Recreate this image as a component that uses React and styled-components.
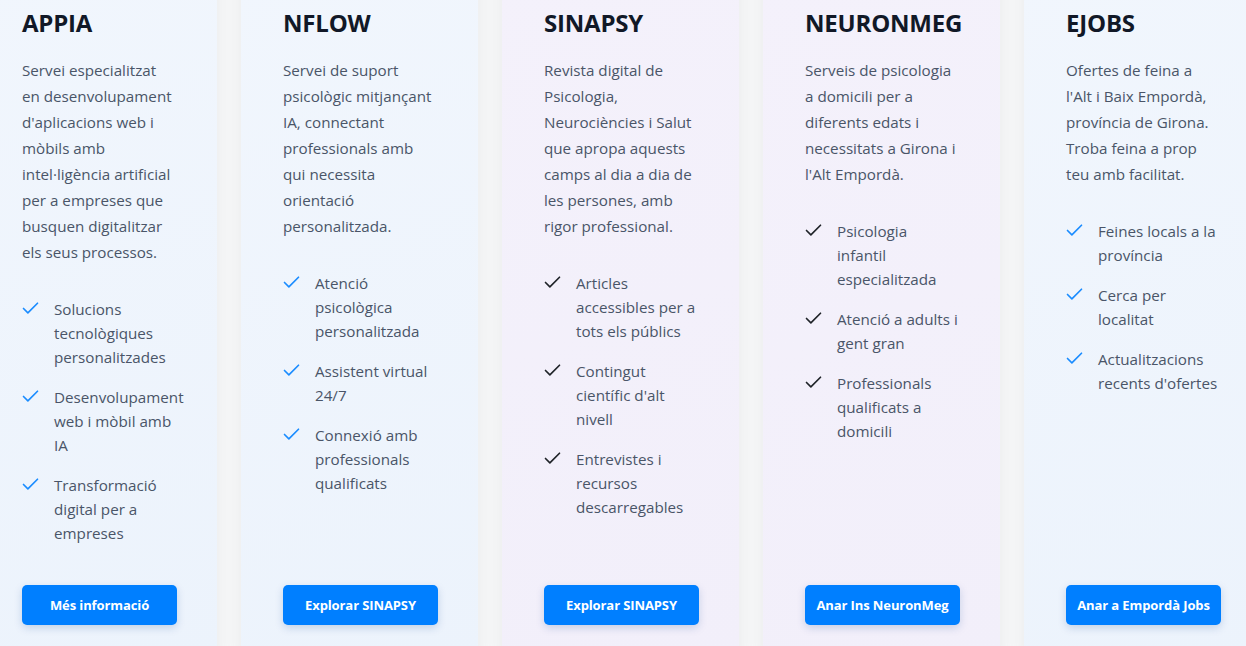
import React from "react";
import styled, { createGlobalStyle } from "styled-components";

const Global = createGlobalStyle`
  html, body { margin: 0; padding: 0; background: #f8f9fa; }
  body { width: 1246px; height: 646px; overflow: hidden; font-family: "Open Sans", "Noto Sans", sans-serif; }
  #root { width: 1246px; height: 646px; overflow: hidden; }
`;

const Row = styled.div`
  display: flex;
  gap: 24px;
  margin-left: -20px;
  margin-top: -32px;
  align-items: stretch;
`;

const Card = styled.div`
  flex: 0 0 237px;
  width: 237px;
  min-width: 0;
  box-sizing: border-box;
  padding: 40px 42px 40px 42px;
  display: flex;
  flex-direction: column;
  border-radius: 8px;
  background: ${(p) =>
    p.$tone === "violet"
      ? "linear-gradient(160deg, #f4f1fb 0%, #f2effa 100%)"
      : "linear-gradient(160deg, #f1f6fd 0%, #ecf3fc 100%)"};
  box-shadow: 0 4px 22px rgba(0, 0, 0, 0.07);
`;

const Title = styled.h3`
  margin: 0;
  font-size: 24px;
  line-height: 29px;
  font-weight: 700;
  color: #111827;
  letter-spacing: -0.2px;
  white-space: nowrap;
`;

const Desc = styled.p`
  margin: 20px 0 0;
  font-size: 15.2px;
  line-height: 26px;
  color: #4a5568;
`;

const List = styled.ul`
  list-style: none;
  margin: 32px 0 0;
  padding: 0;
  display: flex;
  flex-direction: column;
  gap: 16px;
`;

const Item = styled.li`
  display: flex;
  align-items: flex-start;
  gap: 13px;
  font-size: 15.2px;
  line-height: 24px;
  color: #4a5568;
`;

const Check = styled.svg`
  flex: 0 0 21px;
  width: 21px;
  height: 21px;
  margin-top: 1px;
  margin-left: -2px;
  color: ${(p) => (p.$dark ? "#1f2328" : "#1a8cff")};
`;

const Button = styled.button`
  margin-top: auto;
  align-self: flex-start;
  width: 155px;
  height: 40px;
  border: none;
  border-radius: 5px;
  background: #007fff;
  color: #ffffff;
  font-family: "Open Sans", "Noto Sans", sans-serif;
  font-size: 13px;
  font-weight: 700;
  letter-spacing: -0.1px;
  white-space: nowrap;
  box-shadow: 0 3px 8px rgba(0, 60, 140, 0.18);
  cursor: pointer;
`;

const Spacer = styled.div`
  height: 40px;
  flex: 0 0 40px;
`;

const cards = [
  {
    title: "APPIA",
    tone: "blue",
    desc: "Servei especialitzat en desenvolupament d'aplicacions web i mòbils amb intel·ligència artificial per a empreses que busquen digitalitzar els seus processos.",
    items: [
      "Solucions tecnològiques personalitzades",
      "Desenvolupament web i mòbil amb IA",
      "Transformació digital per a empreses",
    ],
    button: "Més informació",
  },
  {
    title: "NFLOW",
    tone: "blue",
    desc: "Servei de suport psicològic mitjançant IA, connectant professionals amb qui necessita orientació personalitzada.",
    items: [
      "Atenció psicològica personalitzada",
      "Assistent virtual 24/7",
      "Connexió amb professionals qualificats",
    ],
    button: "Explorar SINAPSY",
  },
  {
    title: "SINAPSY",
    tone: "violet",
    dark: true,
    desc: "Revista digital de Psicologia, Neurociències i Salut que apropa aquests camps al dia a dia de les persones, amb rigor professional.",
    items: [
      "Articles accessibles per a tots els públics",
      "Contingut científic d'alt nivell",
      "Entrevistes i recursos descarregables",
    ],
    button: "Explorar SINAPSY",
  },
  {
    title: "NEURONMEG",
    tone: "violet",
    dark: true,
    desc: "Serveis de psicologia a domicili per a diferents edats i necessitats a Girona i l'Alt Empordà.",
    items: [
      "Psicologia infantil especialitzada",
      "Atenció a adults i gent gran",
      "Professionals qualificats a domicili",
    ],
    button: "Anar Ins NeuronMeg",
  },
  {
    title: "EJOBS",
    tone: "blue",
    desc: "Ofertes de feina a l'Alt i Baix Empordà, província de Girona. Troba feina a prop teu amb facilitat.",
    items: [
      "Feines locals a la província",
      "Cerca per localitat",
      "Actualitzacions recents d'ofertes",
    ],
    button: "Anar a Empordà Jobs",
  },
];

const CheckIcon = ({ dark }) => (
  <Check $dark={dark} viewBox="0 0 24 24" fill="none" stroke="currentColor" strokeWidth="1.9" strokeLinecap="round" strokeLinejoin="round">
    <path d="M20 6 9 17l-5-5" />
  </Check>
);

export default function App() {
  return (
    <>
      <Global />
      <Row>
        {cards.map((c) => (
          <Card key={c.title} $tone={c.tone}>
            <Title>{c.title}</Title>
            <Desc>{c.desc}</Desc>
            <List>
              {c.items.map((it) => (
                <Item key={it}>
                  <CheckIcon dark={c.dark} />
                  <span>{it}</span>
                </Item>
              ))}
            </List>
            <Spacer />
            <Button>{c.button}</Button>
          </Card>
        ))}
      </Row>
    </>
  );
}
